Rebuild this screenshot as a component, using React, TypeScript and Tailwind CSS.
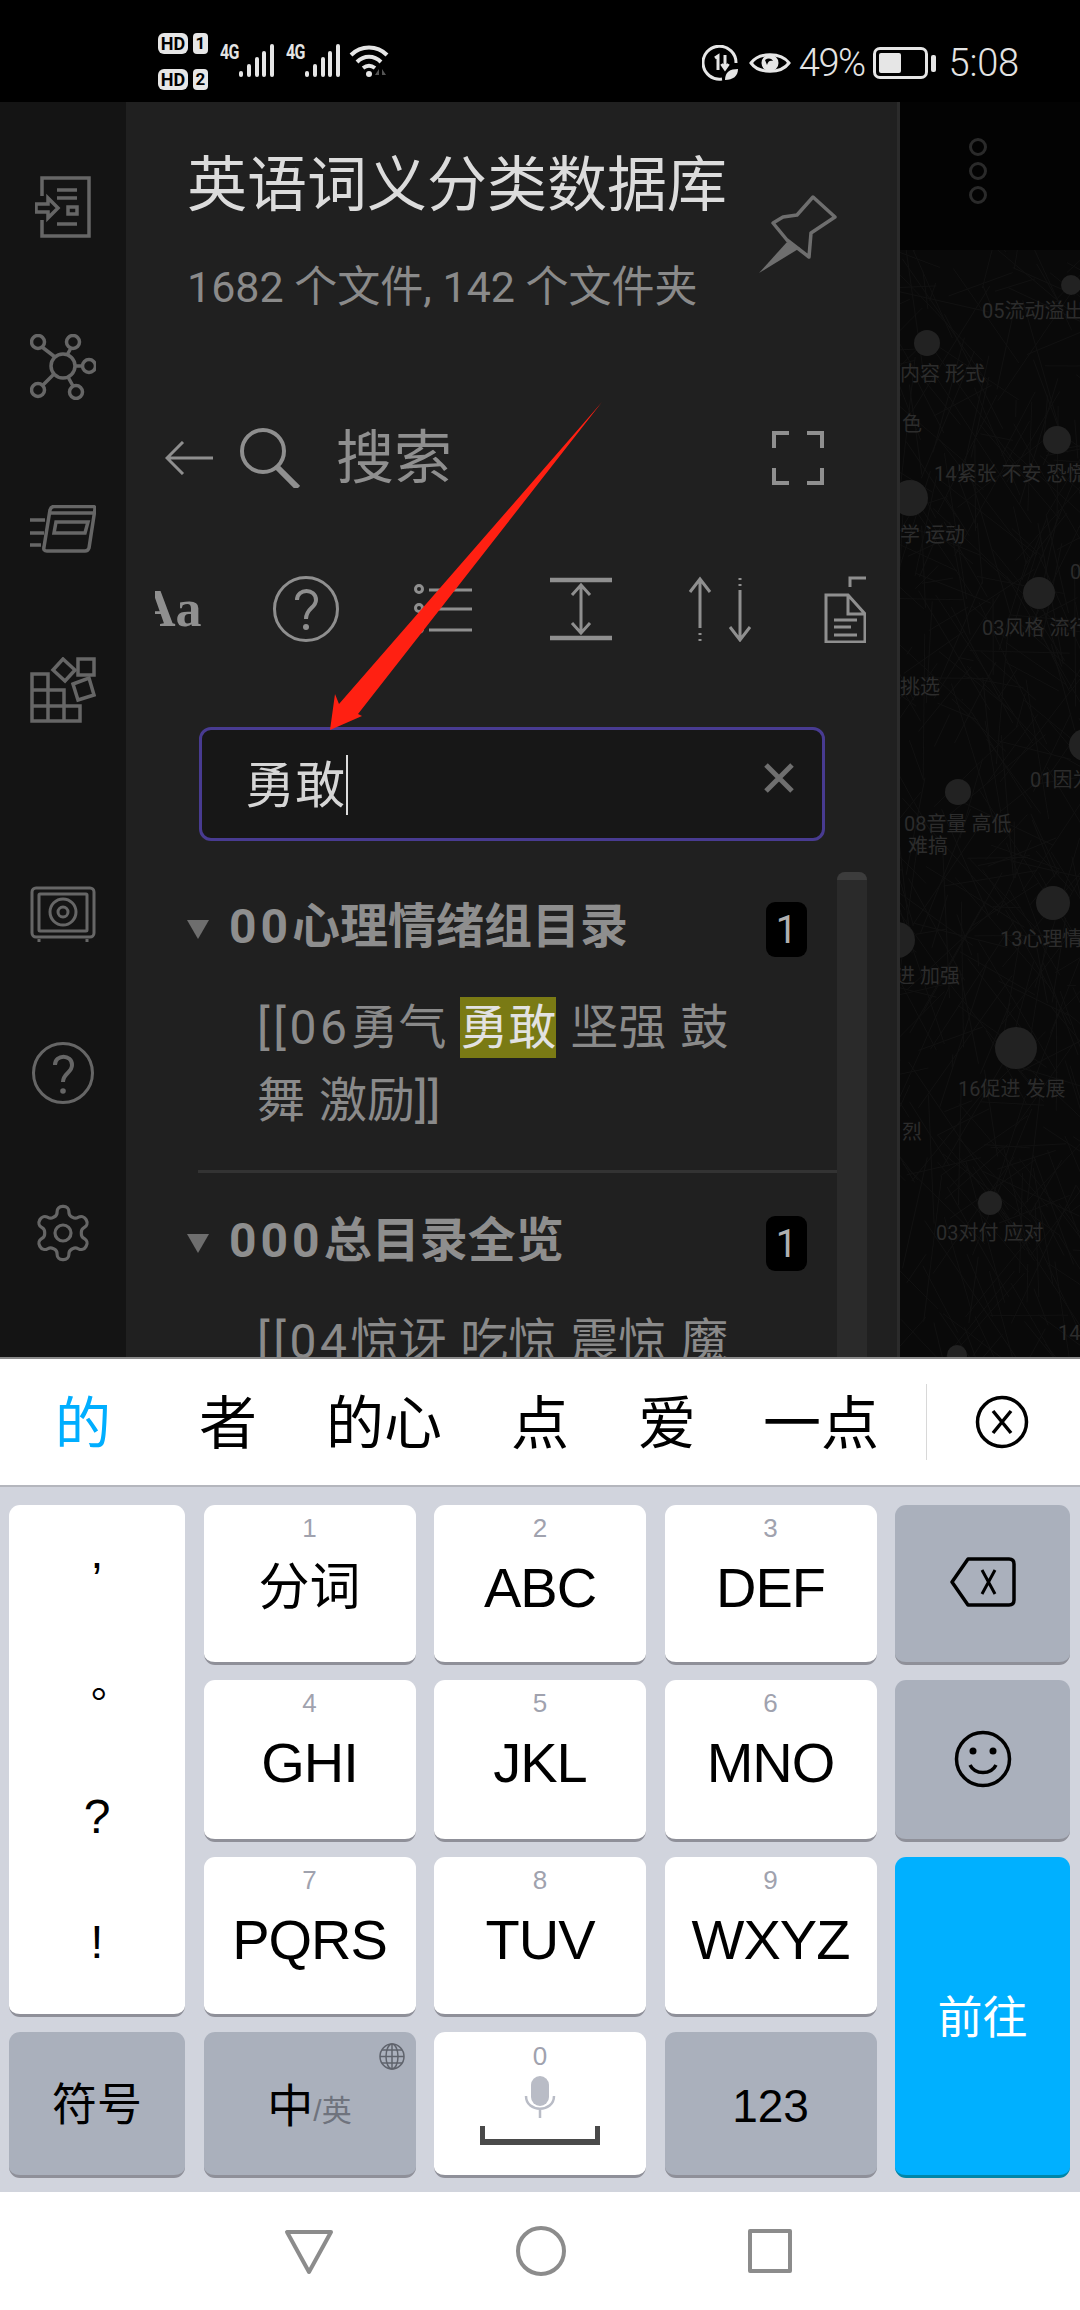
import { ReactNode } from 'react';

const CJK = "font-['Roboto','Noto_Sans_CJK_SC',sans-serif]";
const ARIAL = "font-['Liberation_Sans','Noto_Sans_CJK_SC',sans-serif]";

// graph nodes behind the drawer, x is from the panel edge (900), y from the graph top (250)
const NODES = [
  { x: 171, y: 35, r: 10 },
  { x: 27, y: 93, r: 13 },
  { x: 157, y: 190, r: 14 },
  { x: 10, y: 248, r: 18 },
  { x: 139, y: 343, r: 16 },
  { x: 185, y: 495, r: 16 },
  { x: 58, y: 542, r: 13 },
  { x: 153, y: 653, r: 17 },
  { x: -3, y: 690, r: 18 },
  { x: 116, y: 798, r: 21 },
  { x: 90, y: 953, r: 12 },
  { x: 57, y: 1105, r: 10 },
];

const LABELS = [
  { x: 82, y: 61, t: '05流动溢出' },
  { x: 0, y: 124, t: '内容 形式' },
  { x: 2, y: 174, t: '色' },
  { x: 34, y: 224, t: '14紧张 不安 恐慌' },
  { x: 0, y: 285, t: '学 运动' },
  { x: 170, y: 322, t: '0' },
  { x: 82, y: 378, t: '03风格 流行' },
  { x: 0, y: 437, t: '挑选' },
  { x: 130, y: 530, t: '01因为' },
  { x: 4, y: 574, t: '08音量 高低' },
  { x: 8, y: 596, t: '难搞' },
  { x: 100, y: 689, t: '13心理情' },
  { x: -5, y: 726, t: '进 加强' },
  { x: 58, y: 839, t: '16促进 发展' },
  { x: 2, y: 882, t: '烈' },
  { x: 36, y: 983, t: '03对付 应对' },
  { x: 158, y: 1083, t: '14' },
];

// faint web of edges, fixed seed so the picture stays the same
function makeEdges() {
  const out: { a: number; b: number; c: number; d: number }[] = [];
  let s = 7;
  const next = () => {
    s = (s * 16807) % 2147483647;
    return s / 2147483647;
  };
  for (let i = 0; i < 420; i++) {
    const a = next() * 180;
    const b = next() * 1107;
    out.push({ a, b, c: a + (next() - 0.5) * 200, d: b + (next() - 0.5) * 300 });
  }
  return out;
}
const EDGES = makeEdges();

function Signal() {
  return (
    <svg width="36" height="34" viewBox="0 0 36 34" fill="#e6e6e6">
      <rect x="0" y="27" width="4" height="6" rx="2" />
      <rect x="8" y="20" width="4" height="13" rx="2" />
      <rect x="16" y="13" width="4" height="20" rx="2" />
      <rect x="23" y="7" width="4" height="26" rx="2" />
      <rect x="31" y="0" width="4" height="33" rx="2" />
    </svg>
  );
}

function StatusBar() {
  const badge = 'flex items-center justify-center bg-[#e6e6e6] text-black font-bold leading-none';
  const net = 'mb-[16px] w-[19px] origin-left scale-x-[0.8] text-[20px] font-bold leading-none tracking-[-1px]';
  return (
    <div className={`flex h-[102px] items-center bg-black text-[#e4e4e4] ${CJK}`}>
      <div className="ml-[158px] mt-[21px] flex flex-col gap-[15px]">
        {['1', '2'].map((n) => (
          <div key={n} className="flex gap-[5px]">
            <div className={`${badge} h-[21px] w-[30px] rounded-[6px] text-[18px]`}>HD</div>
            <div className={`${badge} h-[21px] w-[15px] rounded-[4px] text-[17px]`}>{n}</div>
          </div>
        ))}
      </div>
      <div className="mb-[3px] ml-[12px] flex items-end self-end pb-[21px]">
        <span className={net}>4G</span>
        <Signal />
        <span className={`${net} ml-[11px]`}>4G</span>
        <Signal />
        <svg className="ml-[8px]" width="42" height="36" viewBox="0 0 42 36" fill="none" stroke="#e6e6e6" strokeWidth="4">
          <path d="M2 13 C12 3 28 3 38 13" />
          <path d="M8 20 C15 13 25 13 32 20" />
          <path d="M14 26 C18 23 22 23 26 26" />
          <circle cx="20" cy="32" r="3" fill="#e6e6e6" stroke="none" />
          <path d="M30 27 l-4 6 h4 z M33 27 l4 6 h-4 z" fill="#555" stroke="none" />
        </svg>
      </div>
      <div className="ml-auto mr-[61px] mt-[24px] flex items-center">
        <svg width="36" height="36" viewBox="0 0 36 36" fill="none" stroke="#e6e6e6" strokeWidth="3">
          <path d="M20 34 A16.5 16.5 0 1 1 34 18" />
          <path d="M13 13 l3 -2 v14 M23 10 v13 m-3.500 -4 l3.500 5 l3.500 -5" strokeWidth="3" />
          <path d="M23 35 C23 27 28 24 36 24 C36 31 31 35 23 35 Z" fill="#e6e6e6" stroke="none" />
        </svg>
        <svg className="ml-[11px]" width="42" height="28" viewBox="0 0 42 28" fill="none" stroke="#e6e6e6" strokeWidth="3">
          <path d="M2 14 C10 3 32 3 40 14 C32 25 10 25 2 14 Z" />
          <circle cx="21" cy="14" r="8.500" fill="#e6e6e6" stroke="none" />
          <path d="M16 11 C19 9 22 9 24 12 C21 11 19 12 18 16 Z" fill="#000" stroke="none" />
        </svg>
        <span className="ml-[8px] text-[38px] font-light leading-none tracking-[-1.500px]">49%</span>
        <div className="ml-[8px] flex h-[32px] w-[55px] items-center rounded-[7px] border-[3px] border-[#e6e6e6] pl-[3px]">
          <div className="h-[20px] w-[22px] rounded-[2px] bg-[#e6e6e6]" />
        </div>
        <div className="ml-[3px] h-[17px] w-[5px] rounded-[2px] bg-[#e6e6e6]" />
        <span className="ml-[13px] text-[38px] font-light leading-none tracking-[-0.200px]">5:08</span>
      </div>
    </div>
  );
}

function Ribbon() {
  return (
    <div className="flex w-[126px] shrink-0 flex-col items-center bg-[#141414] pt-[74px]">
      {/* open vault */}
      <svg width="56" height="62" viewBox="0 0 56 62" fill="none" stroke="#666" strokeWidth="3.500">
        <path d="M7 20 V2 H54 V60 H7 V44" />
        <path d="M22 14 H42 M22 22 H42 M33 31 H42 V38 H33 Z M22 48 H42" />
        <path d="M1 28 H13 V22 L23 32 L13 42 V36 H1 Z" />
      </svg>
      <svg className="mt-[96px]" width="66" height="66" viewBox="0 0 66 66" fill="none" stroke="#666" strokeWidth="3.500">
        <circle cx="33" cy="32" r="12" />
        <circle cx="8" cy="8" r="6.500" />
        <circle cx="43" cy="8" r="6.500" />
        <circle cx="59" cy="32" r="6.500" />
        <circle cx="8" cy="56" r="6.500" />
        <circle cx="46" cy="58" r="6.500" />
        <path d="M12 13 L25 23 M41 14 L37 21 M45 32 H52 M13 51 L24 40 M38 43 L43 52" />
      </svg>
      <svg className="mt-[105px]" width="66" height="48" viewBox="0 0 66 48" fill="none" stroke="#666" strokeWidth="3.500">
        <path d="M24 1.500 H63 Q65 1.500 65 4 L59 43 Q58 46 55 46 H17 Q13 46 14 42 L20 5 Q21 1.500 24 1.500 Z" />
        <path d="M21 8 H64" />
        <path d="M26 17 H58 L55 28 H24 Z" />
        <path d="M0 15 H15 M0 28 H14 M0 40 H11" />
      </svg>
      <svg className="mt-[104px]" width="66" height="66" viewBox="0 0 66 66" fill="none" stroke="#666" strokeWidth="3.500">
        <path d="M2 17 H18 V64 H2 Z M2 33 H34 V64 M2 49 H50 V64 H18" />
        <path d="M33 2 L45 13 L35 24 L23 13 Z" />
        <rect x="48" y="2" width="16" height="16" />
        <path d="M43 27 L59 21 L64 38 L48 43 Z" />
      </svg>
      <svg className="mt-[163px]" width="66" height="56" viewBox="0 0 66 56" fill="none" stroke="#666" strokeWidth="3">
        <rect x="2" y="2" width="62" height="49" rx="4" />
        <rect x="9" y="8" width="48" height="37" rx="1" />
        <circle cx="33" cy="26" r="13" />
        <circle cx="33" cy="26" r="5" />
        <path d="M9 53 V56 M57 53 V56" />
      </svg>
      <svg className="mt-[99px]" width="64" height="64" viewBox="0 0 64 64" fill="none" stroke="#666" strokeWidth="3">
        <circle cx="32" cy="32" r="29.500" />
        <path d="M24 24 C24 13 41 13 41 24 C41 32 32 32 32 41" strokeWidth="4" />
        <circle cx="32" cy="50" r="2.800" fill="#666" stroke="none" />
      </svg>
      <svg className="mt-[96px]" width="64" height="64" viewBox="0 0 24 24" fill="none" stroke="#666" strokeWidth="1.200">
        <path d="M12.220 2h-.44a2 2 0 0 0-2 2v.18a2 2 0 0 1-1 1.730l-.43.250a2 2 0 0 1-2 0l-.150-.080a2 2 0 0 0-2.730.730l-.220.380a2 2 0 0 0 .730 2.730l.150.100a2 2 0 0 1 1 1.720v.510a2 2 0 0 1-1 1.740l-.150.090a2 2 0 0 0-.730 2.730l.220.380a2 2 0 0 0 2.730.730l.150-.080a2 2 0 0 1 2 0l.430.250a2 2 0 0 1 1 1.730V20a2 2 0 0 0 2 2h.44a2 2 0 0 0 2-2v-.18a2 2 0 0 1 1-1.730l.43-.250a2 2 0 0 1 2 0l.150.080a2 2 0 0 0 2.730-.730l.220-.390a2 2 0 0 0-.730-2.730l-.150-.080a2 2 0 0 1-1-1.740v-.500a2 2 0 0 1 1-1.740l.150-.090a2 2 0 0 0 .730-2.730l-.220-.380a2 2 0 0 0-2.730-.730l-.150.080a2 2 0 0 1-2 0l-.430-.250a2 2 0 0 1-1-1.730V4a2 2 0 0 0-2-2z" />
        <circle cx="12" cy="12" r="3" />
      </svg>
    </div>
  );
}

function IconRow() {
  return (
    <div className="mt-[84px] ml-[29px] flex h-[70px] w-[711px] items-center overflow-hidden text-[#8f8f8f]">
      <span className="ml-[-17px] w-[62px] shrink-0 font-['Liberation_Serif',serif] text-[52px] font-bold leading-none">Aa</span>
      <svg className="ml-[72px] shrink-0" width="68" height="68" viewBox="0 0 68 68" fill="none" stroke="#8f8f8f" strokeWidth="3">
        <circle cx="34" cy="34" r="31.500" />
        <path d="M25 25 C25 13 44 13 44 25 C44 33 34 33 34 44" strokeWidth="4" />
        <circle cx="34" cy="52" r="3" fill="#8f8f8f" stroke="none" />
      </svg>
      <svg className="ml-[74px] shrink-0" width="60" height="50" viewBox="0 0 60 50" fill="none" stroke="#8f8f8f" strokeWidth="3">
        <circle cx="5" cy="5" r="3.500" />
        <circle cx="5" cy="24" r="3.500" />
        <circle cx="5" cy="45" r="3.500" />
        <path d="M15 6 H58 M15 25 H58 M15 46 H58" />
      </svg>
      <svg className="ml-[76px] shrink-0" width="62" height="64" viewBox="0 0 62 64" fill="none" stroke="#8f8f8f" strokeWidth="3">
        <path d="M0 3 H62 M0 61 H62" strokeWidth="4.500" />
        <path d="M31 8 V56 M22 18 L31 8 L40 18 M22 46 L31 56 L40 46" />
      </svg>
      <svg className="ml-[76px] shrink-0" width="64" height="66" viewBox="0 0 64 66" fill="none" stroke="#8f8f8f" strokeWidth="3">
        <path d="M12 3 V52 M2 16 L12 3 L22 16 M52 14 V64 M42 51 L52 64 L62 51" />
        <path d="M12 57 V59 M12 63 V65 M52 2 V4 M52 8 V10" />
      </svg>
      <svg className="ml-[72px] shrink-0" width="50" height="68" viewBox="0 0 50 68" fill="none" stroke="#8f8f8f" strokeWidth="3">
        <path d="M2 20 H24 L41 39 V67 H2 Z M24 20 V39 H41" />
        <path d="M10 45 H33 M10 52 H27 M10 60 H33" />
        <path d="M26 12 V3 H42" />
      </svg>
    </div>
  );
}

function SearchInput() {
  return (
    <div className="mt-[83px] ml-[73px] flex h-[114px] w-[626px] items-center rounded-[12px] border-[3px] border-[#483b91] bg-[#171717] pl-[43px] pr-[27px]">
      <span className="mt-[4px] text-[50px] leading-none text-[#d6d6d6]">勇敢</span>
      <div className="ml-[1px] mt-[2px] h-[60px] w-[2px] bg-[#dcdcdc]" />
      <svg className="mb-[13px] ml-auto" width="32" height="32" viewBox="0 0 32 32" stroke="#6f6f6f" strokeWidth="5">
        <path d="M3 3 L29 29 M29 3 L3 29" />
      </svg>
    </div>
  );
}

function ResultGroup({ num, name, children }: { num: string; name: string; children: ReactNode }) {
  return (
    <div>
      <div className="flex h-[55px] items-center">
        <div className="h-0 w-0 border-x-[11px] border-t-[19px] border-x-transparent border-t-[#6e6e6e]" />
        <span className="mb-[5px] ml-[20px] text-[48px] font-bold leading-none text-[#8e8e8e]">
          <span className="tracking-[4px]">{num}</span>
          {name}
        </span>
        <span className="ml-auto mr-[30px] flex h-[55px] w-[41px] items-center justify-center rounded-[9px] bg-black text-[38px] leading-none text-[#b0b0b0]">1</span>
      </div>
      <div className="ml-[70px] mt-[34px] w-[500px] text-[48px] leading-[73px] text-[#8a8a8a] [word-spacing:2px]">{children}</div>
    </div>
  );
}

function Results() {
  return (
    <div className="ml-[61px] mt-[31px] flex flex-1 overflow-hidden">
      <div className="w-[650px] pt-[30px]">
        <ResultGroup num="00" name="心理情绪组目录">
          <span className="tracking-[3.500px]">[[06</span>勇气 <span className="bg-[#7a7a14] py-[2px] text-[#e2e2e2]">勇敢</span> 坚强 鼓舞 激励]]
        </ResultGroup>
        <div className="ml-[11px] mb-[43px] mt-[33px] h-[3px] bg-[#333]" />
        <ResultGroup num="000" name="总目录全览">
          <span className="tracking-[3.500px]">[[04</span>惊讶 吃惊 震惊 魔
        </ResultGroup>
      </div>
      <div className="w-[30px] rounded-t-[8px] bg-[#2a2a2a]">
        <div className="h-[8px] rounded-t-[8px] bg-[#3c3c3c]" />
      </div>
    </div>
  );
}

function Panel() {
  return (
    <div className="flex w-[774px] shrink-0 flex-col border-r-[3px] border-[#2b2b2b] bg-[#202020]">
      <div className="pl-[61px] pt-[49px]">
        <div className="text-[60px] leading-[70px] text-[#dcdcdc]">英语词义分类数据库</div>
        <div className="mt-[41px] text-[43px] leading-[50px] text-[#8a8a8a]">1682 个文件, 142 个文件夹</div>
      </div>
      <div className="mt-[114px] flex h-[64px] items-center text-[#8f8f8f]">
        <svg className="ml-[39px]" width="48" height="34" viewBox="0 0 48 34" fill="none" stroke="#8f8f8f" strokeWidth="3">
          <path d="M48 17 H2 M18 1 L2 17 L18 33" />
        </svg>
        <svg className="ml-[27px]" width="60" height="60" viewBox="0 0 60 60" fill="none" stroke="#8f8f8f" strokeWidth="4">
          <circle cx="23" cy="23" r="21" />
          <path d="M37 39 L58 60" strokeWidth="6" />
        </svg>
        <span className="ml-[36px] text-[58px] leading-none">搜索</span>
        <svg className="ml-auto mr-[73px]" width="52" height="54" viewBox="0 0 52 54" fill="none" stroke="#8f8f8f" strokeWidth="4">
          <path d="M2 17 V2 H17 M35 2 H50 V17 M50 37 V52 H35 M17 52 H2 V37" />
        </svg>
      </div>
      <IconRow />
      <SearchInput />
      <Results />
    </div>
  );
}

function Graph() {
  return (
    <div className="flex min-w-0 flex-1 flex-col bg-[#030303]">
      <div className="flex h-[148px] shrink-0 flex-col items-center gap-[6px] pr-[24px] pt-[36px]">
        {[0, 1, 2].map((i) => (
          <div key={i} className="h-[18px] w-[18px] rounded-full border-[3px] border-[#2a2a2a]" />
        ))}
      </div>
      <div className="relative flex-1 overflow-hidden bg-[#090909]">
        <svg className="absolute inset-0" width="180" height="1107" stroke="#111" strokeWidth="1">
          {EDGES.map((e, i) => (
            <line key={i} x1={e.a} y1={e.b} x2={e.c} y2={e.d} />
          ))}
        </svg>
        {NODES.map((n, i) => (
          <div
            key={i}
            className="absolute rounded-full bg-[#222]"
            style={{ left: n.x - n.r, top: n.y - n.r, width: n.r * 2, height: n.r * 2 }}
          />
        ))}
        {LABELS.map((l, i) => (
          <span
            key={i}
            className="absolute -translate-y-1/2 whitespace-nowrap text-[20px] leading-none text-[#2c2c2c]"
            style={{ left: l.x, top: l.y }}
          >
            {l.t}
          </span>
        ))}
      </div>
    </div>
  );
}

function Candidates() {
  const item = 'mt-[3px] text-[58px] leading-none text-black';
  return (
    <div className={`flex h-[130px] items-center border-b-[2px] border-t-[2px] border-t-[#8a8a8a] border-b-[#b4b6bd] bg-white ${CJK}`}>
      <span className="ml-[55px] mt-[3px] text-[56px] leading-none text-[#00aeff]">的</span>
      <span className={`ml-[88px] ${item}`}>者</span>
      <span className={`ml-[69px] ${item}`}>的心</span>
      <span className={`ml-[69px] ${item}`}>点</span>
      <span className={`ml-[69px] ${item}`}>爱</span>
      <span className={`ml-[67px] ${item}`}>一点</span>
      <div className="ml-[47px] h-[76px] w-px bg-[#d8d8d8]" />
      <svg className="ml-[48px]" width="54" height="54" viewBox="0 0 54 54" fill="none" stroke="#000" strokeWidth="3.500">
        <circle cx="27" cy="27" r="24.500" />
        <path d="M18 16 L36 38 M36 16 L18 38" />
      </svg>
    </div>
  );
}

function Key({ digit, label, labelClass = 'text-[56px] tracking-[-1px]' }: { digit: string; label: string; labelClass?: string }) {
  return (
    <div className="flex flex-col items-center rounded-[11px] border-b-[3px] border-[#8f9099] bg-white">
      <div className="mt-[8px] text-[26px] leading-[30px] text-[#a0a2ae]">{digit}</div>
      <div className={`mt-[15px] leading-[60px] text-black ${labelClass}`}>{label}</div>
    </div>
  );
}

function Keyboard() {
  const gray = 'flex items-center justify-center rounded-[11px] border-b-[3px] border-[#8f9099] bg-[#aab0bc]';
  return (
    <div
      className={`grid grid-cols-[176px_212px_212px_212px_175px] grid-rows-[160px_162px_160px_146px] gap-x-[18.500px] gap-y-[15px] bg-[#d1d4dd] pb-[14px] pl-[9px] pt-[18px] ${ARIAL}`}
    >
      <div className="row-span-3 flex flex-col items-center rounded-[11px] border-b-[3px] border-[#8f9099] bg-white text-black">
        <span className="mt-[24px] h-[131px] text-[46px] leading-[46px]">,</span>
        <span className="h-[133px] translate-x-[14px] font-['Noto_Sans_CJK_SC'] text-[40px] leading-[40px]">。</span>
        <span className="h-[126px] text-[48px] leading-[48px]">?</span>
        <span className="text-[46px] leading-[46px]">!</span>
      </div>
      <Key digit="1" label="分词" labelClass="text-[51px]" />
      <Key digit="2" label="ABC" />
      <Key digit="3" label="DEF" />
      <div className={gray}>
        <svg className="mb-[4px]" width="66" height="50" viewBox="0 0 66 50" fill="none" stroke="#000" strokeWidth="3.500" strokeLinejoin="round">
          <path d="M18 2 H59 Q64 2 64 7 V43 Q64 48 59 48 H18 L2 25 Z" />
          <path d="M32 13 L45 37 M45 13 L32 37" strokeWidth="3" />
        </svg>
      </div>
      <Key digit="4" label="GHI" />
      <Key digit="5" label="JKL" />
      <Key digit="6" label="MNO" />
      <div className={gray}>
        <svg className="mb-[2px]" width="58" height="58" viewBox="0 0 58 58" fill="none" stroke="#000" strokeWidth="3.500">
          <circle cx="29" cy="29" r="26.500" />
          <circle cx="19" cy="21" r="3.500" fill="#000" stroke="none" />
          <circle cx="39" cy="21" r="3.500" fill="#000" stroke="none" />
          <path d="M16 35 C21 45 37 45 42 35" />
        </svg>
      </div>
      <Key digit="7" label="PQRS" />
      <Key digit="8" label="TUV" />
      <Key digit="9" label="WXYZ" />
      <div className="row-span-2 flex items-center justify-center rounded-[11px] border-b-[3px] border-[#0086a8] bg-[#00b0ff] pt-[4px] text-[45px] leading-none text-white">
        前往
      </div>
      <div className={`${gray} pt-[4px] text-[45px] leading-none text-black`}>符号</div>
      <div className={`${gray} relative pt-[4px]`}>
        <span className="text-[46px] leading-none text-black">中</span>
        <span className="mt-[10px] text-[30px] leading-none text-[#6f737d]">/英</span>
        <svg className="absolute right-[11px] top-[11px]" width="26" height="27" viewBox="0 0 26 27" fill="none" stroke="#5f636c" strokeWidth="1.500">
          <ellipse cx="13" cy="13.500" rx="12" ry="12.500" />
          <ellipse cx="13" cy="13.500" rx="6" ry="12.500" />
          <path d="M13 1 V26 M1 13.500 H25 M3 7 H23 M3 20 H23" />
        </svg>
      </div>
      <div className="flex flex-col items-center rounded-[11px] border-b-[3px] border-[#8f9099] bg-white">
        <div className="mt-[9px] text-[26px] leading-[30px] text-[#a0a2ae]">0</div>
        <svg className="mt-[5px]" width="32" height="42" viewBox="0 0 32 42" fill="none" stroke="#b9bcc6" strokeWidth="2.500">
          <rect x="7" y="0" width="18" height="30" rx="9" fill="#b9bcc6" stroke="none" />
          <path d="M2 20 C2 37 30 37 30 20 M16 33 V42" />
        </svg>
        <svg className="mt-[8px]" width="120" height="20" viewBox="0 0 120 20" fill="#4a4a4a">
          <path d="M0 0 H5 V13 H115 V0 H120 V19 H0 Z" />
        </svg>
      </div>
      <div className={`${gray} pt-[4px] text-[46px] leading-none text-black`}>123</div>
    </div>
  );
}

function NavBar() {
  return (
    <div className="flex h-[118px] items-start bg-white pt-[34px]">
      <svg className="ml-[284px] mt-[3px]" width="50" height="46" viewBox="0 0 50 46" fill="none" stroke="#8c8c8c" strokeWidth="4" strokeLinejoin="round">
        <path d="M3 3 H47 L25 43 Z" />
      </svg>
      <div className="ml-[182px] h-[50px] w-[50px] rounded-full border-[4px] border-[#8c8c8c]" />
      <div className="ml-[182px] mt-[3px] h-[44px] w-[44px] rounded-[2px] border-[4px] border-[#8c8c8c]" />
    </div>
  );
}

export default function App() {
  return (
    <div className={`relative flex h-[2310px] w-[1080px] flex-col overflow-hidden ${CJK}`}>
      <StatusBar />
      <div className="flex h-[1255px] overflow-hidden">
        <Ribbon />
        <Panel />
        <Graph />
      </div>
      <Candidates />
      <Keyboard />
      <NavBar />
      {/* pin icon of the drawer and the annotation arrow lie over the panel */}
      <svg className="absolute left-[758px] top-[195px]" width="80" height="80" viewBox="0 0 80 80" fill="none" stroke="#6e6e6e" strokeWidth="3.500" strokeLinejoin="round">
        <path d="M55 2 L77 22 L53 38 L51 62 L29 45 L15 28 L25 22 L39 20 Z" />
        <path d="M29 47 L1 78 L42 53" fill="#6e6e6e" stroke="none" />
      </svg>
      <svg className="pointer-events-none absolute left-0 top-0" width="1080" height="800" viewBox="0 0 1080 800">
        <path d="M602 402 L358 714 L362 716 L330 730 L335 694 L339 704 Z" fill="#ff2012" />
      </svg>
    </div>
  );
}
